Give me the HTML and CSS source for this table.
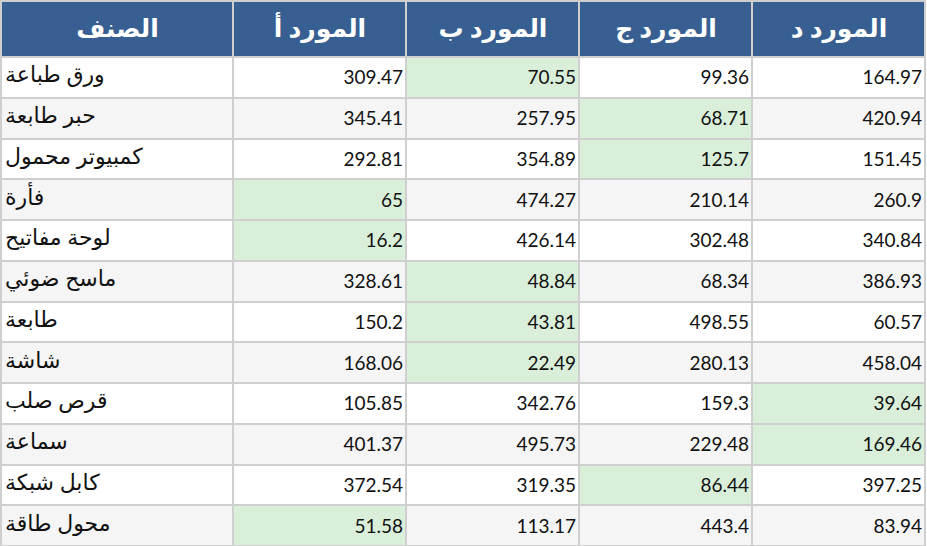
FILE: index.html
```html
<!DOCTYPE html>
<html lang="ar">
<head>
<meta charset="utf-8">
<link rel="stylesheet" href="styles.css">
</head>
<body>
<table class="grid">
  <colgroup>
    <col class="c-name">
    <col class="c-val"><col class="c-val"><col class="c-val"><col class="c-val">
  </colgroup>
  <thead>
    <tr><th>الصنف</th><th>المورد أ</th><th>المورد ب</th><th>المورد ج</th><th>المورد د</th></tr>
  </thead>
  <tbody>
    <tr><td class="name">ورق طباعة</td><td>309.47</td><td class="low">70.55</td><td>99.36</td><td>164.97</td></tr>
    <tr><td class="name">حبر طابعة</td><td>345.41</td><td>257.95</td><td class="low">68.71</td><td>420.94</td></tr>
    <tr><td class="name">كمبيوتر محمول</td><td>292.81</td><td>354.89</td><td class="low">125.7</td><td>151.45</td></tr>
    <tr><td class="name">فأرة</td><td class="low">65</td><td>474.27</td><td>210.14</td><td>260.9</td></tr>
    <tr><td class="name">لوحة مفاتيح</td><td class="low">16.2</td><td>426.14</td><td>302.48</td><td>340.84</td></tr>
    <tr><td class="name">ماسح ضوئي</td><td>328.61</td><td class="low">48.84</td><td>68.34</td><td>386.93</td></tr>
    <tr><td class="name">طابعة</td><td>150.2</td><td class="low">43.81</td><td>498.55</td><td>60.57</td></tr>
    <tr><td class="name">شاشة</td><td>168.06</td><td class="low">22.49</td><td>280.13</td><td>458.04</td></tr>
    <tr><td class="name">قرص صلب</td><td>105.85</td><td>342.76</td><td>159.3</td><td class="low">39.64</td></tr>
    <tr><td class="name">سماعة</td><td>401.37</td><td>495.73</td><td>229.48</td><td class="low">169.46</td></tr>
    <tr><td class="name">كابل شبكة</td><td>372.54</td><td>319.35</td><td class="low">86.44</td><td>397.25</td></tr>
    <tr><td class="name">محول طاقة</td><td class="low">51.58</td><td>113.17</td><td>443.4</td><td>83.94</td></tr>
  </tbody>
</table>
</body>
</html>
```
FILE: styles.css
```css
html, body {
  margin: 0;
  padding: 0;
  background: #ffffff;
}
.grid {
  border-collapse: collapse;
  width: 926px;
  table-layout: fixed;
  font-family: Lato, "DejaVu Sans", sans-serif;
  font-size: 19px;
  color: #111;
}
.c-name { width: 232px; }
.grid th,
.grid td {
  border: 2px solid #cfcfcf;
  padding: 0 2px 0 3px;
  overflow: hidden;
  white-space: nowrap;
}
.grid th {
  background: #385f91;
  color: #fff;
  font-weight: bold;
  font-size: 25px;
  line-height: 30px;
  text-align: center;
  height: 50px;
  padding-bottom: 4px;
}
.grid td {
  height: 32.75px;
  text-align: right;
  line-height: 20px;
}
.grid td.name {
  text-align: left;
  font-size: 22px;
  padding-bottom: 6px;
}
.grid tbody tr:nth-child(even) td {
  background: #f5f5f5;
}
.grid tbody tr td.low {
  background: #d9efd9;
}
```
